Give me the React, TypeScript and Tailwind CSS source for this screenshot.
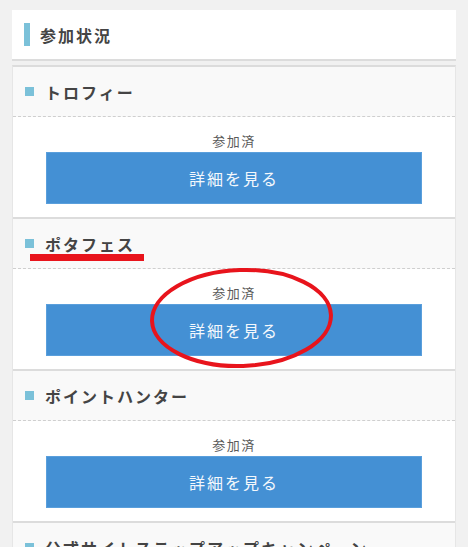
const events = [
  { id: 1, title: "トロフィー", status: "参加済" },
  { id: 2, title: "ポタフェス", status: "参加済" },
  { id: 3, title: "ポイントハンター", status: "参加済" },
  { id: 4, title: "公式サイトステップアップキャンペーン", status: "参加済" },
];

function EventItem({ title, status, first }: { title: string; status: string; first: boolean }) {
  return (
    <div className={first ? "" : "border-t-2 border-[#dcdcdc]"}>
      <div className="flex h-[50px] items-center border-b border-dashed border-[#cfcfcf] bg-[#f9f9f9] pl-3">
        <span className="h-[9px] w-[9px] bg-[#7bc1d9]" />
        <h3 className="ml-[11px] whitespace-nowrap text-[16px] font-bold tracking-[2px] text-[#444]">{title}</h3>
      </div>
      <div className="bg-white px-[33px] pt-[13px] pb-[13px]">
        <p className="text-center text-[13px] leading-[22px] tracking-[1.5px] text-[#5a5a5a]">{status}</p>
        <button className="flex h-[52px] w-full items-center justify-center border border-[#5a9fdc] bg-[#4490d4] text-[16px] tracking-[2px] text-[#f4f8fc]">
          詳細を見る
        </button>
      </div>
    </div>
  );
}

export default function App() {
  return (
    <div
      className="relative h-[547px] overflow-hidden bg-[#f1f1f1] px-3 pt-[10px]"
      style={{ fontFamily: '"Noto Sans CJK JP", "Noto Sans", sans-serif' }}
    >
      <div className="flex h-[51px] items-center border-b-2 border-[#dcdcdc] bg-white pl-3">
        <span className="h-[23px] w-[6px] bg-[#7bc1d9]" />
        <h2 className="ml-[10px] text-[16px] font-bold tracking-[2px] text-[#444]">参加状況</h2>
      </div>

      <div className="mt-1 border-t-2 border-x border-[#dcdcdc] border-x-[#e6e6e6]">
        {events.map((ev, i) => (
          <EventItem key={ev.id} title={ev.title} status={ev.status} first={i === 0} />
        ))}
      </div>

      {/* red markup drawn over the list */}
      <div className="pointer-events-none absolute left-[30px] top-[254px] h-[7px] w-[114px] bg-[#e8141c]" />
      <svg className="pointer-events-none absolute left-0 top-0" width="468" height="547">
        <ellipse
          cx="241.5"
          cy="318"
          rx="89.5"
          ry="48"
          fill="none"
          stroke="#e8141c"
          strokeWidth="4"
          transform="rotate(-2 241.5 318)"
        />
      </svg>
    </div>
  );
}
